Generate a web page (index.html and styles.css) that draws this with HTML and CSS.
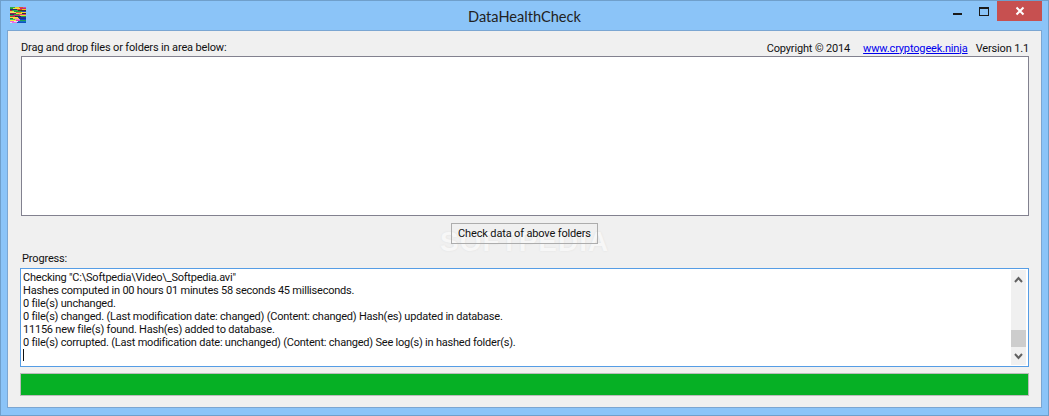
FILE: index.html
```html
<!DOCTYPE html>
<html lang="en">
<head>
<meta charset="utf-8">
<title>DataHealthCheck</title>
<link rel="stylesheet" href="styles.css">
</head>
<body>
<div class="window">
  <header class="titlebar">
    <svg class="app-icon" width="16" height="16" viewBox="0 0 16 16" shape-rendering="crispEdges">
      <rect width="16" height="16" fill="#3a5a3a"/>
      <rect x="0" y="0" width="5" height="1" fill="#2fb04a"/><rect x="5" y="0" width="4" height="1" fill="#e8d020"/><rect x="9" y="0" width="4" height="1" fill="#e05030"/><rect x="13" y="0" width="3" height="1" fill="#d850a0"/>
      <rect x="0" y="1" width="3" height="1" fill="#20a040"/><rect x="3" y="1" width="7" height="1" fill="#f0e040"/><rect x="10" y="1" width="6" height="1" fill="#c03070"/>
      <rect x="0" y="2" width="7" height="1" fill="#203070"/><rect x="7" y="2" width="5" height="1" fill="#e04030"/><rect x="12" y="2" width="4" height="1" fill="#f0c020"/>
      <rect x="0" y="3" width="2" height="1" fill="#c02040"/><rect x="2" y="3" width="6" height="1" fill="#30b050"/><rect x="8" y="3" width="8" height="1" fill="#403030"/>
      <rect x="0" y="4" width="4" height="1" fill="#e8e040"/><rect x="4" y="4" width="8" height="1" fill="#20a040"/><rect x="12" y="4" width="4" height="1" fill="#2040c0"/>
      <rect x="0" y="5" width="6" height="1" fill="#f0e870"/><rect x="6" y="5" width="5" height="1" fill="#e06030"/><rect x="11" y="5" width="5" height="1" fill="#f0d830"/>
      <rect x="0" y="6" width="6" height="1" fill="#902050"/><rect x="6" y="6" width="6" height="1" fill="#f0e030"/><rect x="12" y="6" width="4" height="1" fill="#303030"/>
      <rect x="0" y="7" width="4" height="1" fill="#203860"/><rect x="4" y="7" width="5" height="1" fill="#30a040"/><rect x="9" y="7" width="7" height="1" fill="#d04080"/>
      <rect x="0" y="8" width="3" height="1" fill="#30b050"/><rect x="3" y="8" width="7" height="1" fill="#c03070"/><rect x="10" y="8" width="6" height="1" fill="#e8d840"/>
      <rect x="0" y="9" width="5" height="1" fill="#d03030"/><rect x="5" y="9" width="6" height="1" fill="#203050"/><rect x="11" y="9" width="5" height="1" fill="#20a040"/>
      <rect x="0" y="10" width="8" height="1" fill="#f0e050"/><rect x="8" y="10" width="8" height="1" fill="#2030a0"/>
      <rect x="0" y="11" width="3" height="1" fill="#208040"/><rect x="3" y="11" width="6" height="1" fill="#f0d040"/><rect x="9" y="11" width="7" height="1" fill="#183090"/>
      <rect x="0" y="12" width="5" height="1" fill="#40c060"/><rect x="5" y="12" width="5" height="1" fill="#f080d0"/><rect x="10" y="12" width="6" height="1" fill="#1040d0"/>
      <rect x="0" y="13" width="6" height="1" fill="#f0f040"/><rect x="6" y="13" width="4" height="1" fill="#e040b0"/><rect x="10" y="13" width="6" height="1" fill="#20a050"/>
      <rect x="0" y="14" width="4" height="1" fill="#f060e0"/><rect x="4" y="14" width="4" height="1" fill="#e0e0f0"/><rect x="8" y="14" width="8" height="1" fill="#1070c0"/>
      <rect x="0" y="15" width="2" height="1" fill="#e0e0f0"/><rect x="2" y="15" width="5" height="1" fill="#f070e0"/><rect x="7" y="15" width="9" height="1" fill="#1050c0"/>
    </svg>
    <h1 class="title">DataHealthCheck</h1>
    <div class="controls">
      <span class="ctl ctl-min"><svg width="9" height="9" viewBox="0 0 9 9" shape-rendering="crispEdges"><rect x="0" y="6" width="9" height="2" fill="#1a1a1a"/></svg></span>
      <span class="ctl ctl-max"><svg width="10" height="9" viewBox="0 0 10 9" shape-rendering="crispEdges"><path d="M0 0h10v9H0z M1 2v6h8V2z" fill="#1a1a1a" fill-rule="evenodd"/></svg></span>
      <span class="ctl ctl-close"><svg width="10" height="10" viewBox="0 0 10 10"><path d="M1.5 1.5l7 7M8.500 1.500l-7 7" stroke="#fff" stroke-width="2"/></svg></span>
    </div>
  </header>
  <main class="client">
    <div class="top-row">
      <span class="label">Drag and drop files or folders in area below:</span>
      <div class="about">
        <span>Copyright © 2014</span>
        <a class="link" href="#">www.cryptogeek.ninja</a>
        <span class="version">Version 1.1</span>
      </div>
    </div>
    <div class="dropzone"></div>
    <div class="action-row">
      <span class="watermark">SOFTPEDIA</span>
      <button class="check-btn" type="button">Check data of above folders</button>
    </div>
    <div class="progress-label label">Progress:</div>
    <div class="logbox">
      <div class="log">
        <div>Checking "C:\Softpedia\Video\_Softpedia.avi"</div>
        <div>Hashes computed in 00 hours 01 minutes 58 seconds 45 milliseconds.</div>
        <div>0 file(s) unchanged.</div>
        <div>0 file(s) changed. (Last modification date: changed) (Content: changed) Hash(es) updated in database.</div>
        <div>11156 new file(s) found. Hash(es) added to database.</div>
        <div>0 file(s) corrupted. (Last modification date: unchanged) (Content: changed) See log(s) in hashed folder(s).</div>
        <div class="caret"></div>
      </div>
      <div class="scrollbar">
        <svg class="arrow" width="9" height="7" viewBox="0 0 9 7"><path d="M1 6l3.500-4 3.500 4" fill="none" stroke="#606060" stroke-width="2"/></svg>
        <div class="track"><div class="thumb"></div></div>
        <svg class="arrow" width="9" height="7" viewBox="0 0 9 7"><path d="M1 1l3.500 4 3.500-4" fill="none" stroke="#606060" stroke-width="2"/></svg>
      </div>
    </div>
    <div class="progressbar"></div>
  </main>
</div>
</body>
</html>
```
FILE: styles.css
```css
* { box-sizing: border-box; }
html, body { margin: 0; padding: 0; }
body {
  width: 1049px;
  height: 416px;
  overflow: hidden;
  background: #8bc4f8;
  font-family: "Roboto", "Open Sans", sans-serif;
  font-size: 11px;
  letter-spacing: -0.15px;
  color: #111;
}
.window {
  width: 1049px;
  height: 416px;
  display: flex;
  flex-direction: column;
  background: #8bc4f8;
  border: 1px solid #6f9fcb;
  padding: 0 6px 7px 6px;
}
.titlebar {
  height: 29px;
  flex: none;
  display: grid;
  grid-template-columns: 1fr auto 1fr;
  align-items: start;
}
.app-icon { margin: 6px 0 0 3px; }
.title {
  margin: 6px 0 0;
  font-family: "Lato", sans-serif;
  font-size: 14.6px;
  font-weight: 400;
  letter-spacing: 0;
  line-height: 20px;
  color: #222;
}
.controls {
  justify-self: end;
  display: flex;
}
.ctl {
  height: 20px;
  display: flex;
  align-items: center;
  justify-content: center;
}
.ctl-min { width: 26px; }
.ctl-max { width: 27px; }
.ctl-close { width: 45px; background: #c75050; }
.client {
  flex: 1;
  display: flex;
  flex-direction: column;
  background: #f0f0f0;
  border: 1px solid #7ba6d2;
  padding: 9px 12px 11px 12px;
}
.top-row {
  height: 16px;
  display: flex;
  justify-content: space-between;
  align-items: center;
  padding: 0 0 0 1px;
  flex: none;
}
.label { line-height: 16px; }
.about { display: flex; gap: 13px; }
.version { margin-left: -5px; }
.link { color: #0000ee; text-decoration: underline; }
.dropzone {
  height: 160px;
  flex: none;
  margin: 0 0 0 1px;
  background: #fff;
  border: 1px solid #82818f;
}
.action-row {
  position: relative;
  height: 21px;
  margin-top: 7px;
  flex: none;
  display: flex;
  justify-content: center;
}
.check-btn {
  position: relative;
  width: 147px;
  height: 21px;
  padding: 0;
  background: transparent;
  border: 1px solid #adadad;
  font: inherit;
  letter-spacing: inherit;
  color: #111;
  white-space: nowrap;
}
.watermark {
  position: absolute;
  left: 420px;
  top: 3px;
  font-family: "Liberation Sans", sans-serif;
  font-size: 28px;
  font-weight: 700;
  line-height: 32px;
  letter-spacing: 1px;
  color: #f7f7f7;
  text-shadow: 0 0 2px #dedede;
}
.progress-label {
  margin: 7px 0 0 2px;
  height: 16px;
  flex: none;
}
.logbox {
  height: 99px;
  margin-top: 1px;
  flex: none;
  display: flex;
  background: #fff;
  border: 1px solid #569de5;
}
.log {
  flex: 1;
  padding: 2px 0 0 2px;
  line-height: 13px;
  letter-spacing: -0.22px;
  white-space: nowrap;
}
.caret { width: 1px; height: 12px; background: #111; }
.scrollbar {
  width: 15px;
  margin: 1px 2px 1px 0;
  display: flex;
  flex-direction: column;
  align-items: center;
  background: #f0f0f0;
  padding: 6px 0 5px;
}
.track { flex: 1; width: 100%; display: flex; flex-direction: column; justify-content: flex-end; padding-bottom: 6px; }
.thumb { height: 17px; background: #cdcdcd; }
.arrow { flex: none; }
.progressbar {
  height: 23px;
  margin-top: 6px;
  flex: none;
  background: #06b025;
  border: 1px solid #bcbcbc;
}
```
